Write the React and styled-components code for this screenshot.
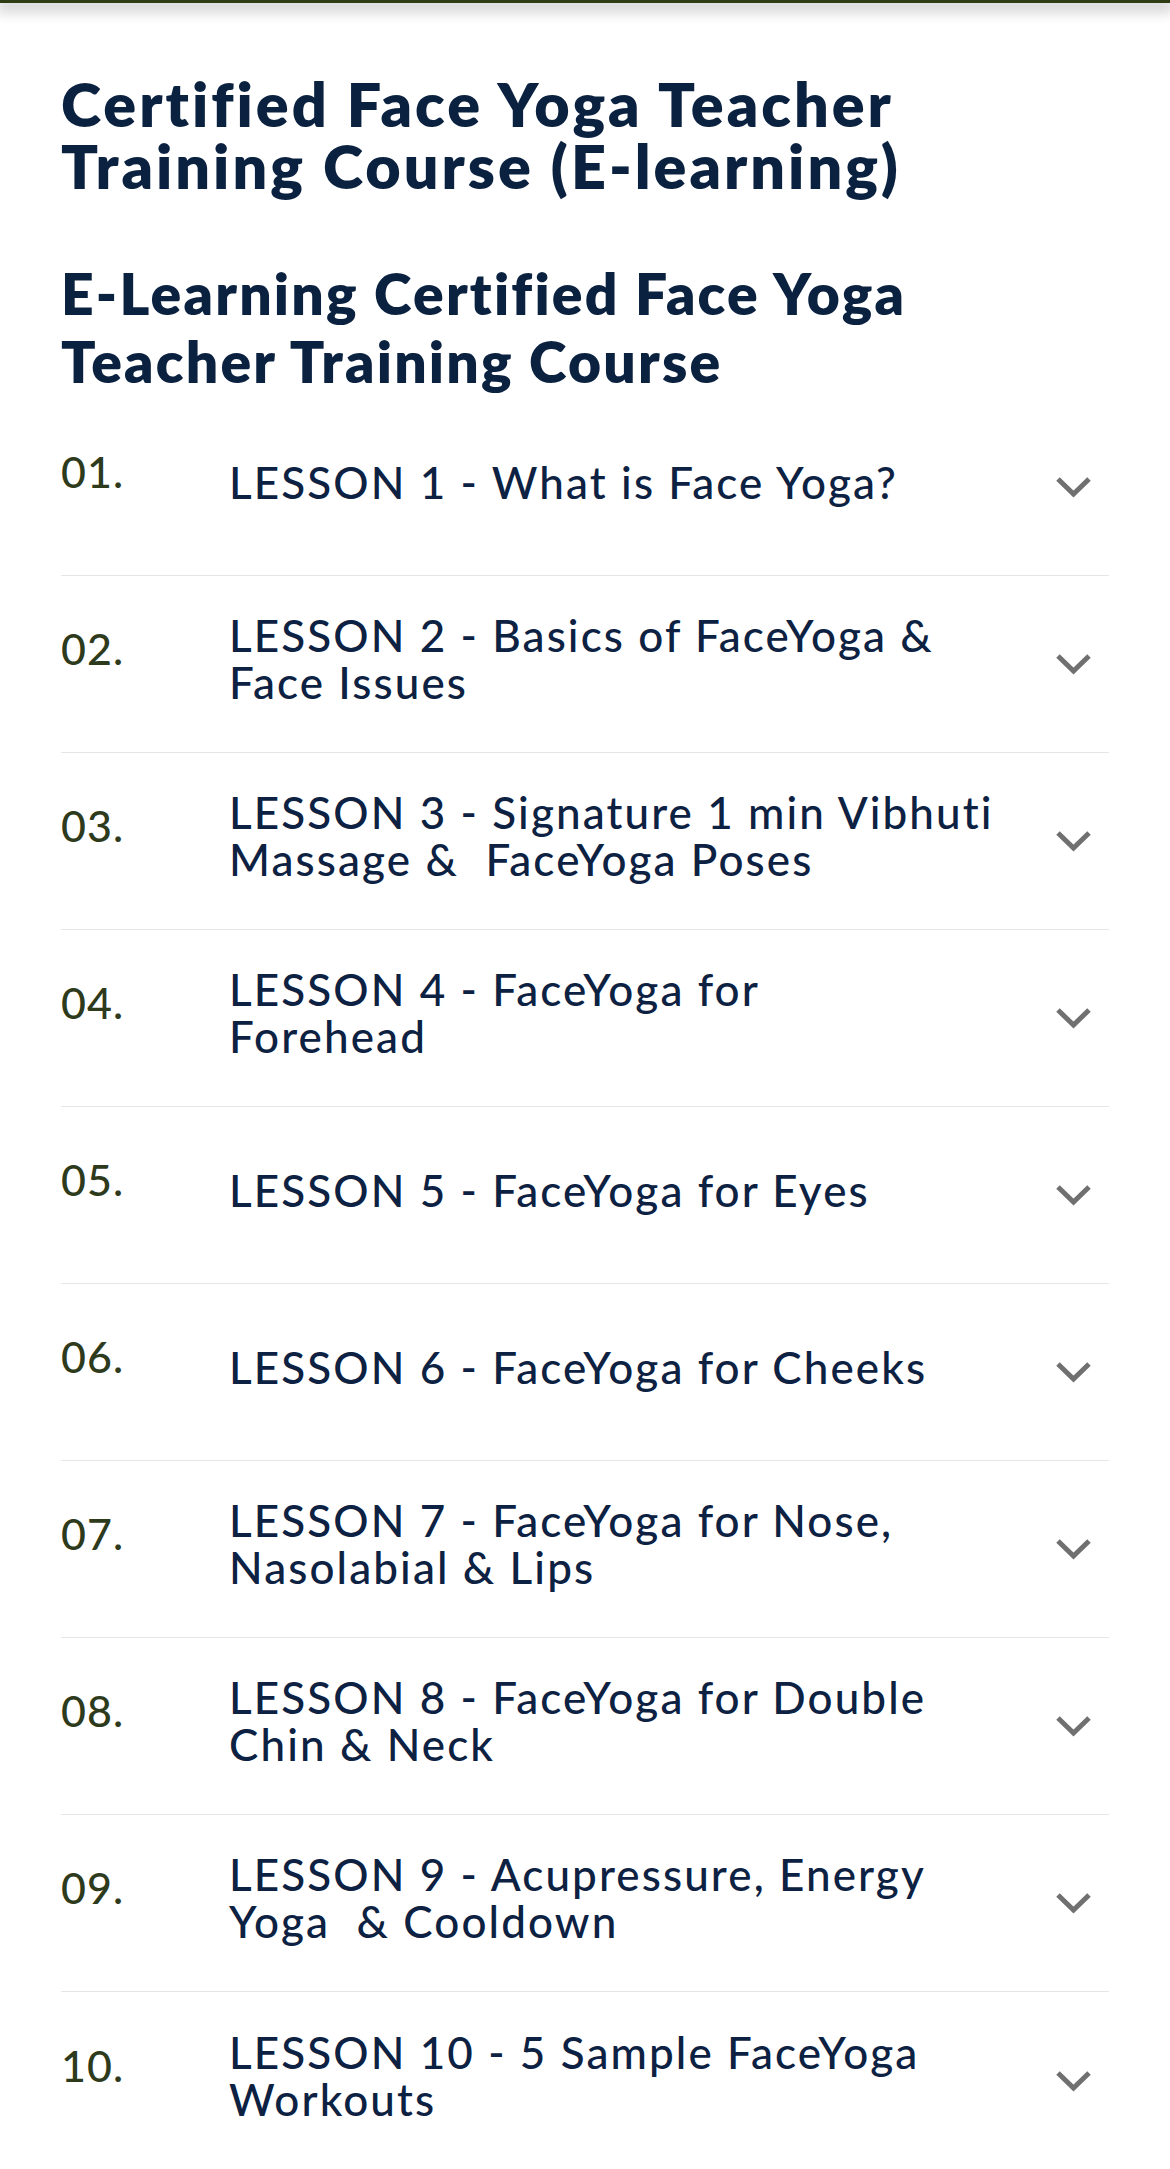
import React from 'react';
import styled, {createGlobalStyle} from 'styled-components';

const GlobalStyle = createGlobalStyle`
  html, body {
    margin: 0;
    padding: 0;
    background: #ffffff;
  }
  body {
    font-family: 'Lato', 'Noto Sans', sans-serif;
  }
`;

const TopBar = styled.div`
  height: 3px;
  background: #2f3b12;
  box-shadow: 0 4px 14px 4px rgba(0, 0, 0, 0.22);
  position: relative;
  z-index: 2;
`;

const Main = styled.main`
  padding: 0 61px;
`;

const Title = styled.h1`
  margin: 70px 0 0;
  font-size: 61px;
  line-height: 62px;
  font-weight: 800;
  color: #0b2140;
  letter-spacing: 3px;
`;

const Subtitle = styled.h2`
  margin: 62px 0 0;
  font-size: 57px;
  line-height: 68px;
  font-weight: 800;
  color: #0b2140;
  letter-spacing: 2.2px;
`;

const List = styled.ul`
  list-style: none;
  margin: 4px 0 0;
  padding: 0;
`;

const Row = styled.li`
  display: grid;
  grid-template-columns: 168px 1fr 70px;
  align-items: center;
  height: 177px;
  box-sizing: border-box;
  border-bottom: ${p => (p.$last ? 'none' : '1px solid #e6e6e6')};
`;

const Num = styled.span`
  font-size: 43px;
  line-height: 46px;
  font-weight: 500;
  color: #2e3a1c;
  margin-bottom: 30px;
  letter-spacing: 1px;
`;

const LessonTitle = styled.span`
  font-size: 44px;
  line-height: 47px;
  font-weight: 500;
  color: #0d2142;
  margin-bottom: 10px;
  letter-spacing: 2.1px;
  white-space: pre;
`;

const Chevron = styled.svg`
  justify-self: end;
  margin-right: 17px;
  width: 37px;
  height: 22px;
`;

const lessons = [
  ['LESSON 1 - What is Face Yoga?'],
  ['LESSON 2 - Basics of FaceYoga &', 'Face Issues'],
  ['LESSON 3 - Signature 1 min Vibhuti', 'Massage &  FaceYoga Poses'],
  ['LESSON 4 - FaceYoga for', 'Forehead'],
  ['LESSON 5 - FaceYoga for Eyes'],
  ['LESSON 6 - FaceYoga for Cheeks'],
  ['LESSON 7 - FaceYoga for Nose,', 'Nasolabial & Lips'],
  ['LESSON 8 - FaceYoga for Double', 'Chin & Neck'],
  ['LESSON 9 - Acupressure, Energy', 'Yoga  & Cooldown'],
  ['LESSON 10 - 5 Sample FaceYoga', 'Workouts'],
];

const ChevronIcon = () => (
  <Chevron viewBox="0 0 37 22" fill="none">
    <polyline
      points="3,3 18.5,18 34,3"
      stroke="#707070"
      strokeWidth="5"
      strokeLinecap="butt"
      strokeLinejoin="miter"
    />
  </Chevron>
);

const App = () => {
  return (
    <>
      <GlobalStyle />
      <TopBar />
      <Main>
        <Title>
          Certified Face Yoga Teacher
          <br />
          Training Course (E-learning)
        </Title>
        <Subtitle>
          E-Learning Certified Face Yoga
          <br />
          Teacher Training Course
        </Subtitle>
        <List>
          {lessons.map((lines, i) => (
            <Row key={i} $last={i === lessons.length - 1}>
              <Num>{String(i + 1).padStart(2, '0')}.</Num>
              <LessonTitle>
                {lines.map((l, j) => (
                  <React.Fragment key={j}>
                    {j > 0 && <br />}
                    {l}
                  </React.Fragment>
                ))}
              </LessonTitle>
              <ChevronIcon />
            </Row>
          ))}
        </List>
      </Main>
    </>
  );
};

export default App;
